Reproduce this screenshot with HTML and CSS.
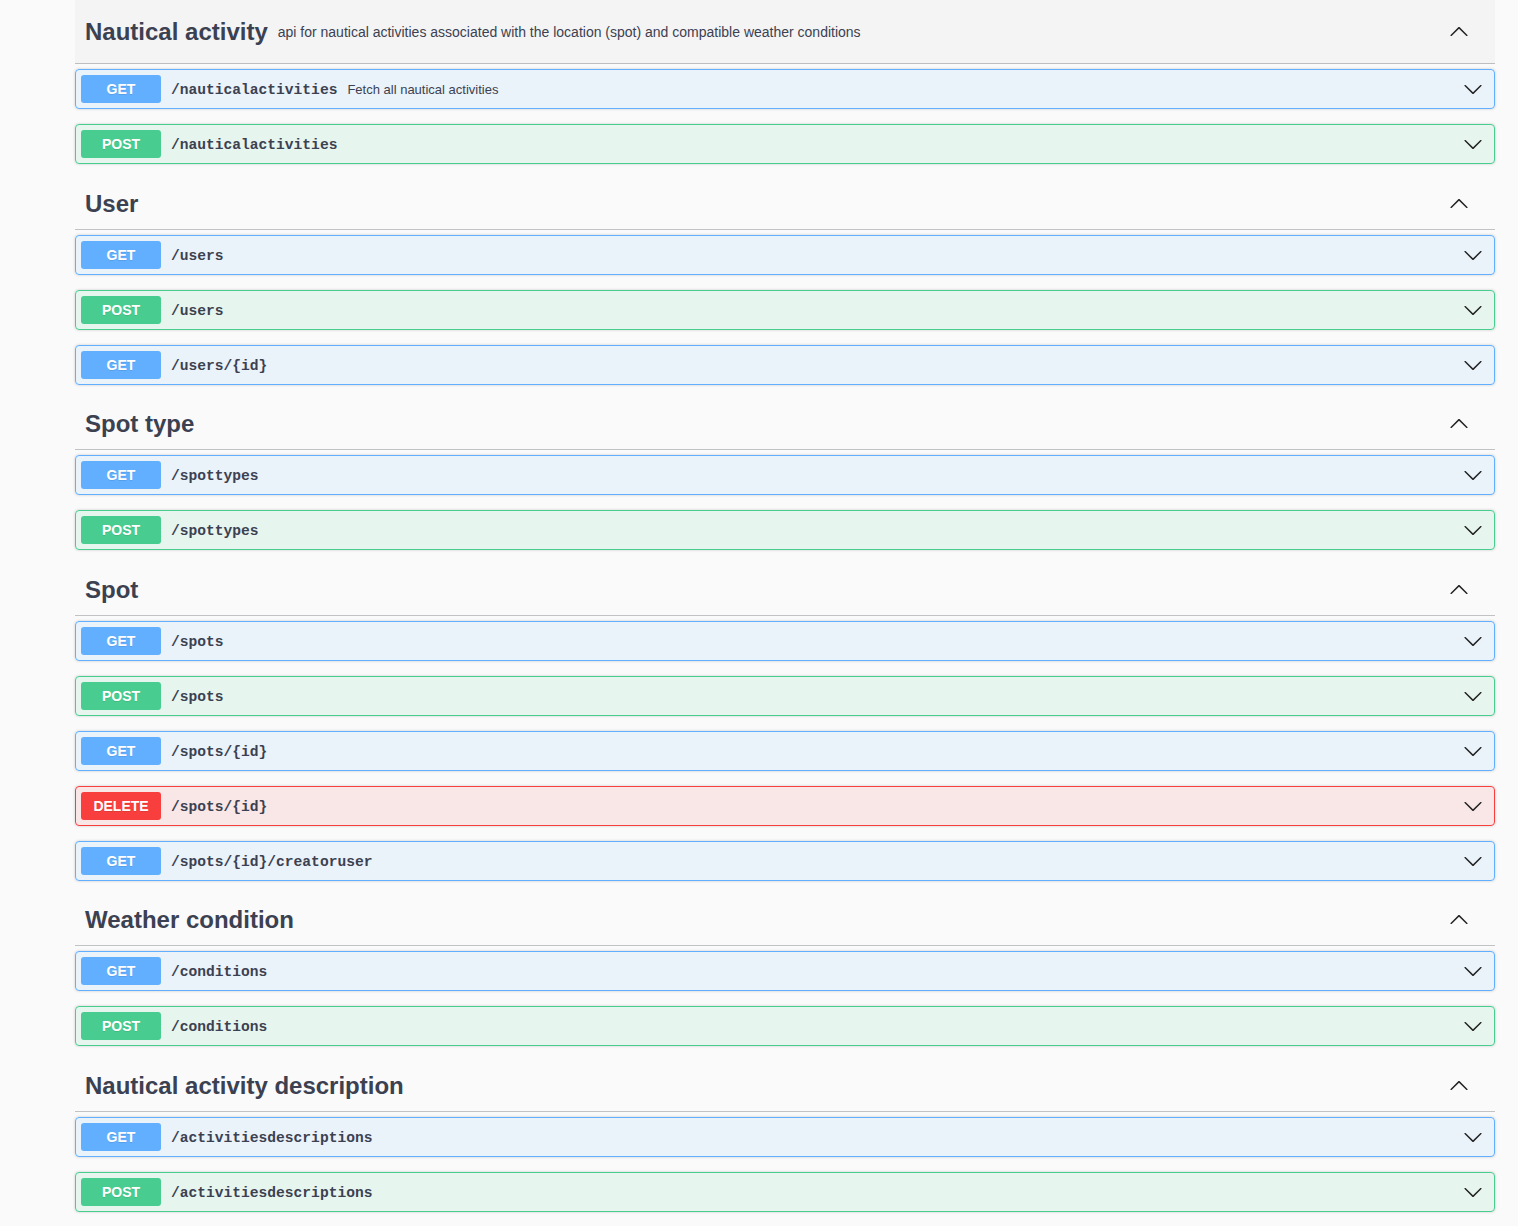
FILE: index.html
```html
<!DOCTYPE html>
<html lang="en">
<head>
<meta charset="utf-8">
<title>API</title>
<link rel="stylesheet" href="styles.css">
</head>
<body>
<svg width="0" height="0" class="defs" aria-hidden="true">
  <defs>
    <path id="arrow" d="M17.418 6.109c.272-.268.709-.268.979 0s.271.701 0 .969l-7.908 7.83c-.27.268-.707.268-.979 0l-7.908-7.83c-.27-.268-.27-.701 0-.969.271-.268.709-.268.979 0L10 13.25l7.418-7.141z"/>
  </defs>
</svg>
<div class="wrapper">

  <section class="tag-section">
    <h3 class="tag tag-first"><span class="tag-title">Nautical activity</span><small class="tag-desc">api for nautical activities associated with the location (spot) and compatible weather conditions</small><svg class="tag-arrow" viewBox="0 0 20 20"><use href="#arrow" transform="rotate(180 10 10)"/></svg></h3>
    <div class="op op-get"><span class="method">GET</span><span class="path">/nauticalactivities</span><span class="summary">Fetch all nautical activities</span><svg class="op-arrow" viewBox="0 0 20 20"><use href="#arrow"/></svg></div>
    <div class="op op-post"><span class="method">POST</span><span class="path">/nauticalactivities</span><span class="summary"></span><svg class="op-arrow" viewBox="0 0 20 20"><use href="#arrow"/></svg></div>
  </section>

  <section class="tag-section">
    <h3 class="tag"><span class="tag-title">User</span><small class="tag-desc"></small><svg class="tag-arrow" viewBox="0 0 20 20"><use href="#arrow" transform="rotate(180 10 10)"/></svg></h3>
    <div class="op op-get"><span class="method">GET</span><span class="path">/users</span><span class="summary"></span><svg class="op-arrow" viewBox="0 0 20 20"><use href="#arrow"/></svg></div>
    <div class="op op-post"><span class="method">POST</span><span class="path">/users</span><span class="summary"></span><svg class="op-arrow" viewBox="0 0 20 20"><use href="#arrow"/></svg></div>
    <div class="op op-get"><span class="method">GET</span><span class="path">/users/{id}</span><span class="summary"></span><svg class="op-arrow" viewBox="0 0 20 20"><use href="#arrow"/></svg></div>
  </section>

  <section class="tag-section">
    <h3 class="tag"><span class="tag-title">Spot type</span><small class="tag-desc"></small><svg class="tag-arrow" viewBox="0 0 20 20"><use href="#arrow" transform="rotate(180 10 10)"/></svg></h3>
    <div class="op op-get"><span class="method">GET</span><span class="path">/spottypes</span><span class="summary"></span><svg class="op-arrow" viewBox="0 0 20 20"><use href="#arrow"/></svg></div>
    <div class="op op-post"><span class="method">POST</span><span class="path">/spottypes</span><span class="summary"></span><svg class="op-arrow" viewBox="0 0 20 20"><use href="#arrow"/></svg></div>
  </section>

  <section class="tag-section">
    <h3 class="tag"><span class="tag-title">Spot</span><small class="tag-desc"></small><svg class="tag-arrow" viewBox="0 0 20 20"><use href="#arrow" transform="rotate(180 10 10)"/></svg></h3>
    <div class="op op-get"><span class="method">GET</span><span class="path">/spots</span><span class="summary"></span><svg class="op-arrow" viewBox="0 0 20 20"><use href="#arrow"/></svg></div>
    <div class="op op-post"><span class="method">POST</span><span class="path">/spots</span><span class="summary"></span><svg class="op-arrow" viewBox="0 0 20 20"><use href="#arrow"/></svg></div>
    <div class="op op-get"><span class="method">GET</span><span class="path">/spots/{id}</span><span class="summary"></span><svg class="op-arrow" viewBox="0 0 20 20"><use href="#arrow"/></svg></div>
    <div class="op op-delete"><span class="method">DELETE</span><span class="path">/spots/{id}</span><span class="summary"></span><svg class="op-arrow" viewBox="0 0 20 20"><use href="#arrow"/></svg></div>
    <div class="op op-get"><span class="method">GET</span><span class="path">/spots/{id}/creatoruser</span><span class="summary"></span><svg class="op-arrow" viewBox="0 0 20 20"><use href="#arrow"/></svg></div>
  </section>

  <section class="tag-section">
    <h3 class="tag"><span class="tag-title">Weather condition</span><small class="tag-desc"></small><svg class="tag-arrow" viewBox="0 0 20 20"><use href="#arrow" transform="rotate(180 10 10)"/></svg></h3>
    <div class="op op-get"><span class="method">GET</span><span class="path">/conditions</span><span class="summary"></span><svg class="op-arrow" viewBox="0 0 20 20"><use href="#arrow"/></svg></div>
    <div class="op op-post"><span class="method">POST</span><span class="path">/conditions</span><span class="summary"></span><svg class="op-arrow" viewBox="0 0 20 20"><use href="#arrow"/></svg></div>
  </section>

  <section class="tag-section">
    <h3 class="tag"><span class="tag-title">Nautical activity description</span><small class="tag-desc"></small><svg class="tag-arrow" viewBox="0 0 20 20"><use href="#arrow" transform="rotate(180 10 10)"/></svg></h3>
    <div class="op op-get"><span class="method">GET</span><span class="path">/activitiesdescriptions</span><span class="summary"></span><svg class="op-arrow" viewBox="0 0 20 20"><use href="#arrow"/></svg></div>
    <div class="op op-post"><span class="method">POST</span><span class="path">/activitiesdescriptions</span><span class="summary"></span><svg class="op-arrow" viewBox="0 0 20 20"><use href="#arrow"/></svg></div>
  </section>

</div>
</body>
</html>
```

FILE: styles.css
```css
html, body {
  margin: 0;
  padding: 0;
  background: #fafafa;
  font-family: "Liberation Sans", Arial, sans-serif;
  color: #3b4151;
}

.defs {
  position: absolute;
  width: 0;
  height: 0;
  overflow: hidden;
}

.wrapper {
  width: 1420px;
  margin-left: 75px;
  display: flex;
  flex-direction: column;
}

.tag-section {
  display: flex;
  flex-direction: column;
}

.tag {
  display: flex;
  align-items: center;
  margin: 0 0 5px;
  padding: 10px 20px 10px 10px;
  height: 29.5px;
  border-bottom: 1px solid rgba(59, 65, 81, 0.3);
  font-size: 24px;
  font-weight: 700;
  color: #3b4151;
}

.tag-first {
  height: 30px;
  padding-top: 17px;
  padding-bottom: 16px;
  background: #f4f4f4;
}

.tag-title {
  line-height: 30px;
}

.tag-desc {
  flex: 1;
  padding: 0 10px;
  font-size: 14px;
  font-weight: 400;
  color: #3b4151;
}

.tag-arrow {
  width: 20px;
  height: 20px;
  margin-right: 6px;
  fill: #222;
}

.op {
  display: flex;
  align-items: center;
  margin: 0 0 15px;
  padding: 5px;
  border: 1px solid #000;
  border-radius: 4px;
  box-shadow: 0 0 3px rgba(0, 0, 0, 0.19);
}

.op-get {
  background: rgba(97, 175, 254, 0.1);
  border-color: #61affe;
}

.op-get .method {
  background: #61affe;
}

.op-post {
  background: rgba(73, 204, 144, 0.1);
  border-color: #49cc90;
}

.op-post .method {
  background: #49cc90;
}

.op-delete {
  background: rgba(249, 62, 62, 0.1);
  border-color: #f93e3e;
}

.op-delete .method {
  background: #f93e3e;
}

.method {
  min-width: 80px;
  padding: 6px 0;
  border-radius: 3px;
  font-size: 14px;
  line-height: 16px;
  font-weight: 700;
  color: #fff;
  text-align: center;
  text-shadow: 0 1px 0 rgba(0, 0, 0, 0.1);
}

.path {
  padding: 2px 10px 0;
  font-family: "Liberation Mono", "Courier New", monospace;
  font-size: 14.6px;
  font-weight: 700;
  color: #3b4151;
}

.summary {
  flex: 1;
  padding-top: 1px;
  font-size: 13px;
  color: #3b4151;
}

.op-arrow {
  width: 20px;
  height: 20px;
  margin-right: 6px;
  fill: #222;
}
```
